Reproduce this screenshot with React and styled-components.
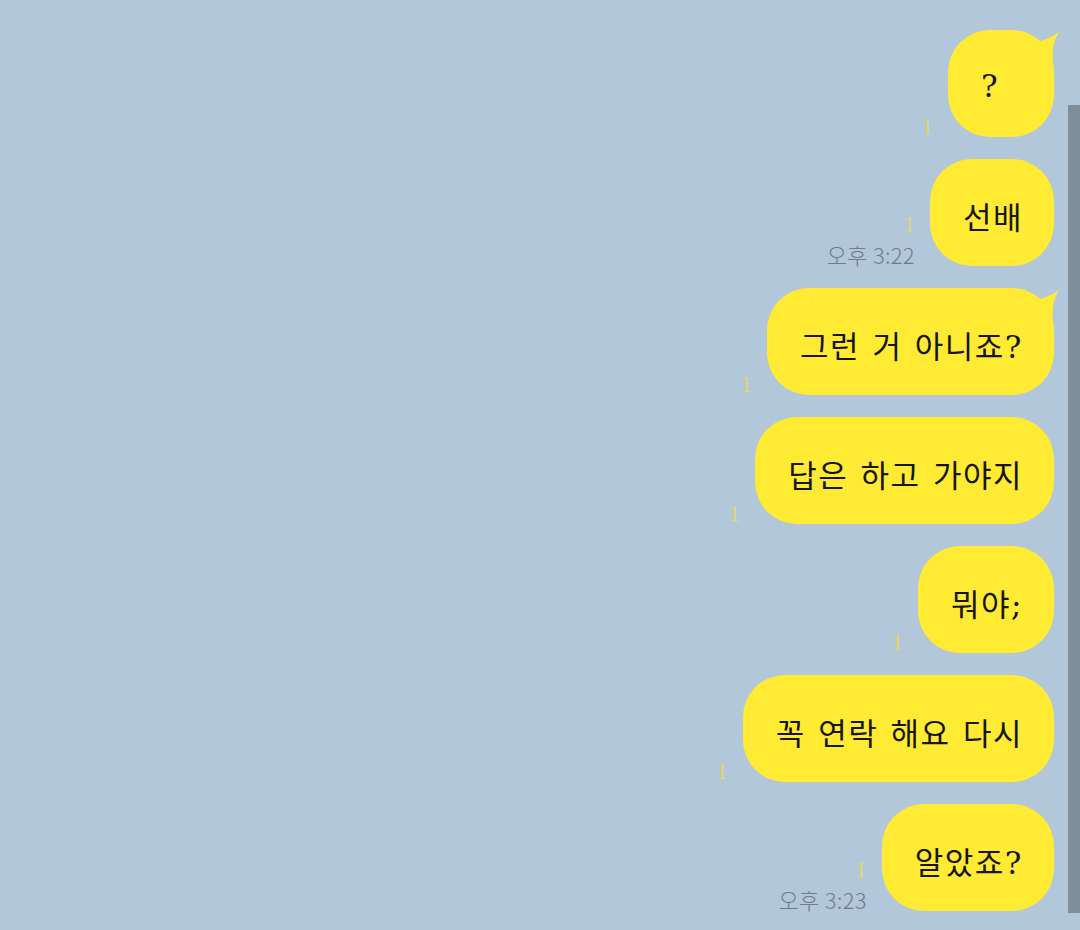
import React from "react";
import styled, { createGlobalStyle } from "styled-components";

const Global = createGlobalStyle`
  html, body { margin: 0; padding: 0; background: #b2c7da; }
  body { width: 1080px; height: 930px; overflow: hidden; }
`;

const Screen = styled.div`
  position: relative;
  width: 1080px;
  height: 930px;
  background: #b2c7da;
  overflow: hidden;
`;

const List = styled.div`
  display: flex;
  flex-direction: column;
  align-items: flex-end;
  gap: 22px;
  padding: 30px 26px 0 0;
`;

const Row = styled.div`
  display: flex;
  align-items: flex-end;
  gap: 15px;
`;

const Meta = styled.div`
  display: flex;
  flex-direction: column;
  align-items: flex-end;
  margin-bottom: ${(p) => (p.$time ? "-4px" : "-3px")};
`;

const Unread = styled.span`
  font-family: "Liberation Serif", serif;
  font-size: 24px;
  line-height: 27px;
  color: #e0d66a;
`;

const Time = styled.span`
  font-family: "Noto Sans CJK KR", sans-serif;
  font-weight: 300;
  font-size: 22px;
  line-height: 32px;
  color: #6f7b89;
  letter-spacing: 0.3px;
`;

const Bubble = styled.div`
  position: relative;
  box-sizing: border-box;
  height: 107px;
  min-width: 106px;
  padding: 5px 31px 0 33px;
  border-radius: 42px;
  background: #ffeb33;
  display: flex;
  align-items: center;
  justify-content: flex-start;
  font-family: "DejaVu Serif", "Noto Sans CJK KR", serif;
  font-size: 31px;
  color: #161616;
  white-space: pre;
  letter-spacing: 1.5px;
  word-spacing: 1px;
`;

const Tail = styled.svg`
  position: absolute;
  top: 0;
  right: -6px;
  width: 30px;
  height: 30px;
`;

const Scroll = styled.div`
  position: absolute;
  top: 105px;
  right: 0;
  width: 12px;
  height: 808px;
  background: #808d9a;
`;

const messages = [
  { text: "?", tail: true },
  { text: "선배", time: "오후 3:22" },
  { text: "그런 거 아니죠?", tail: true },
  { text: "답은 하고 가야지" },
  { text: "뭐야;" },
  { text: "꼭 연락 해요 다시" },
  { text: "알았죠?", time: "오후 3:23" },
];

export default function App() {
  return (
    <Screen>
      <Global />
      <List>
        {messages.map((m, i) => (
          <Row key={i}>
            <Meta $time={!!m.time}>
              <Unread>1</Unread>
              {m.time && <Time>{m.time}</Time>}
            </Meta>
            <Bubble>
              {m.tail && (
                <Tail viewBox="0 0 30 30">
                  <path d="M2 13 Q18 10 29 2 Q21 14 23 30 L2 30 Z" fill="#ffeb33" />
                </Tail>
              )}
              {m.text}
            </Bubble>
          </Row>
        ))}
      </List>
      <Scroll />
    </Screen>
  );
}
